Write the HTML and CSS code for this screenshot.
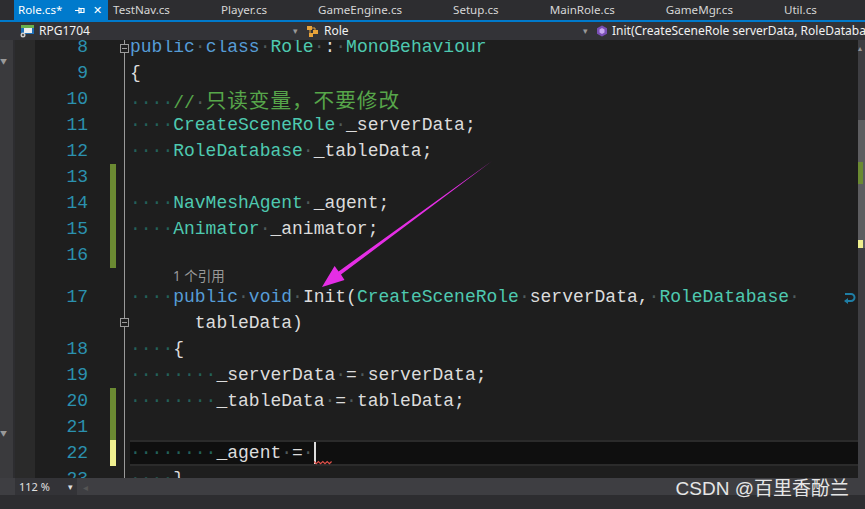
FILE: index.html
```html
<!DOCTYPE html>
<html lang="en">
<head>
    <meta charset="UTF-8">
    <title>Role.cs - Visual Studio</title>
    <link rel="stylesheet" href="styles.css">
</head>
<body>

    <div class="tabs">
        <div class="tab active">
            <span>Role.cs*</span>
            <svg class="pin" width="11" height="9" viewBox="0 0 11 9">
                <path d="M0 4.5h4M4 1.5v6M4 2.5h5v4H4M6 2.5v4" stroke="#fff" stroke-width="1.2" fill="none"/>
            </svg>
            <span class="close">&#10005;</span>
        </div>
        <div class="tab">TestNav.cs</div>
        <div class="tab">Player.cs</div>
        <div class="tab">GameEngine.cs</div>
        <div class="tab">Setup.cs</div>
        <div class="tab">MainRole.cs</div>
        <div class="tab">GameMgr.cs</div>
        <div class="tab">Util.cs</div>
    </div>

    <div class="navbar">
        <div class="combo first">
            <svg class="ico" width="16" height="14" viewBox="0 0 16 14">
                <rect x="2" y="1" width="13" height="9" fill="#1f6fb8"/>
                <rect x="2" y="1" width="13" height="3" fill="#6ab04c"/>
                <rect x="5" y="4" width="8" height="5" fill="#eee"/>
                <circle cx="4" cy="11" r="2.5" fill="#ccc"/>
                <circle cx="4" cy="11" r="1" fill="#333"/>
            </svg>
            <span>RPG1704</span>
            <span class="arrow">&#9662;</span>
        </div>
        <div class="combo second">
            <svg class="ico" width="14" height="14" viewBox="0 0 14 14">
                <rect x="1" y="2" width="5" height="4" fill="#e8a33a"/>
                <rect x="7" y="6" width="5" height="4" fill="#e8a33a"/>
                <rect x="3" y="9" width="4" height="4" fill="#e8a33a"/>
                <path d="M4 6v3M6 4h3v2" stroke="#e8a33a" fill="none"/>
            </svg>
            <span>Role</span>
            <span class="arrow">&#9662;</span>
        </div>
        <div class="combo third">
            <svg class="ico" width="12" height="12" viewBox="0 0 12 12">
                <polygon points="6,0.5 11,3.2 11,8.8 6,11.5 1,8.8 1,3.2" fill="#7a4fb5"/>
                <polygon points="6,3 8.5,4.4 8.5,7.6 6,9 3.5,7.6 3.5,4.4" fill="#c7a8f0"/>
            </svg>
            <span>Init(CreateSceneRole serverData, RoleDatabase tableData)</span>
        </div>
    </div>

    <div class="editor">
        <div class="sidepane">
            <span class="side-arrow">&#9660;</span>
            <span class="side-arrow down">&#9660;</span>
        </div>
        <div class="margin"></div>
        <div class="view">
            <div class="lines">
                <div class="row"><span class="num">8</span><span class="mark"></span><span class="fold"><i class="box first-box"></i></span><span class="code"><b class="kw">public</b><b class="sp">·</b><b class="kw">class</b><b class="sp">·</b><b class="ty">Role</b><b class="sp">·</b>:<b class="sp">·</b><b class="ty">MonoBehaviour</b></span></div>
                <div class="row"><span class="num">9</span><span class="mark"></span><span class="fold"></span><span class="code">{</span></div>
                <div class="row"><span class="num">10</span><span class="mark"></span><span class="fold"></span><span class="code"><b class="ws">····</b><b class="cm">//<b class="sp">·</b><b class="cjk">只读变量，不要修改</b></b></span></div>
                <div class="row"><span class="num">11</span><span class="mark"></span><span class="fold"></span><span class="code"><b class="ws">····</b><b class="ty">CreateSceneRole</b><b class="sp">·</b>_serverData;</span></div>
                <div class="row"><span class="num">12</span><span class="mark"></span><span class="fold"></span><span class="code"><b class="ws">····</b><b class="ty">RoleDatabase</b><b class="sp">·</b>_tableData;</span></div>
                <div class="row"><span class="num">13</span><span class="mark saved"></span><span class="fold"></span><span class="code"></span></div>
                <div class="row"><span class="num">14</span><span class="mark saved"></span><span class="fold"></span><span class="code"><b class="ws">····</b><b class="ty">NavMeshAgent</b><b class="sp">·</b>_agent;</span></div>
                <div class="row"><span class="num">15</span><span class="mark saved"></span><span class="fold"></span><span class="code"><b class="ws">····</b><b class="ty">Animator</b><b class="sp">·</b>_animator;</span></div>
                <div class="row"><span class="num">16</span><span class="mark saved"></span><span class="fold"></span><span class="code"></span></div>
                <div class="row lens"><span class="num"></span><span class="mark"></span><span class="fold"></span><span class="code">1 个引用</span></div>
                <div class="row"><span class="num">17</span><span class="mark"></span><span class="fold"></span><span class="code"><b class="ws">····</b><b class="kw">public</b><b class="sp">·</b><b class="kw">void</b><b class="sp">·</b>Init(<b class="ty">CreateSceneRole</b><b class="sp">·</b>serverData,<b class="sp">·</b><b class="ty">RoleDatabase</b><b class="sp">·</b><svg class="wrap-glyph" width="14" height="12" viewBox="0 0 14 12"><path d="M3 2h6a3.5 3.5 0 0 1 0 7H4" stroke="#1f7ea5" stroke-width="2" fill="none"/><path d="M6 6l-4 3l4 3z" fill="#1f7ea5"/></svg></span></div>
                <div class="row"><span class="num"></span><span class="mark"></span><span class="fold"><i class="box"></i></span><span class="code">      tableData)</span></div>
                <div class="row"><span class="num">18</span><span class="mark"></span><span class="fold"></span><span class="code"><b class="ws">····</b>{</span></div>
                <div class="row"><span class="num">19</span><span class="mark"></span><span class="fold"></span><span class="code"><b class="ws">········</b>_serverData<b class="sp">·</b>=<b class="sp">·</b>serverData;</span></div>
                <div class="row"><span class="num">20</span><span class="mark saved"></span><span class="fold"></span><span class="code"><b class="ws">········</b>_tableData<b class="sp">·</b>=<b class="sp">·</b>tableData;</span></div>
                <div class="row"><span class="num">21</span><span class="mark saved"></span><span class="fold"></span><span class="code"></span></div>
                <div class="row current"><span class="num">22</span><span class="mark edited"></span><span class="fold"></span><span class="code"><b class="ws">········</b>_agent<b class="sp">·</b>=<b class="sp">·</b><i class="caret"><svg class="squiggle" width="18" height="5" viewBox="0 0 18 5"><path d="M0 1.5l2.2 2.2l2.2-2.2l2.2 2.2l2.2-2.2l2.2 2.2l2.2-2.2l2.2 2.2l2.2-2.2" stroke="#e0514a" stroke-width="1.2" fill="none"/></svg></i></span></div>
                <div class="row"><span class="num">23</span><span class="mark"></span><span class="fold"></span><span class="code"><b class="ws">····</b>}</span></div>
            </div>

            <svg class="arrow-note" width="865" height="509" viewBox="0 0 865 509">
                <polygon points="492,161 341,274.6 344.5,280 322,287 334.6,266 338.6,271.4" fill="#e52ee5"/>
            </svg>
        </div>
        <div class="vscroll">
            <span class="vs-up">&#9652;</span>
            <div class="vs-thumb">
                <i class="vs-green"></i>
                <i class="vs-yellow"></i>
            </div>
        </div>
    </div>

    <div class="statusrow">
        <div class="zoom"><span>112 %</span><span class="arrow">&#9662;</span></div>
        <span class="hs-left">&#9666;</span>
    </div>
    <div class="bottom">
        <span class="watermark">CSDN @百里香酚兰</span>
    </div>

</body>
</html>
```

FILE: styles.css
```css
body {
    margin: 0;
    width: 865px;
    height: 509px;
    overflow: hidden;
    background-color: #2d2d30;
    font-family: 'Noto Sans', 'Noto Sans CJK SC', sans-serif;
    color: #d0d0d0;
}

/* document tabs */
.tabs {
    display: flex;
    height: 20px;
    padding-left: 14px;
    font-size: 11.6px;
    line-height: 20px;
    border-bottom: 2px solid #007acc;
}

.tab {
    padding: 0 46px 0 5px;
    white-space: nowrap;
    color: #d6d6d6;
}

.tab.active {
    display: flex;
    align-items: center;
    width: 90px;
    padding: 0 0 0 4px;
    background-color: #007acc;
    color: #fff;
}

.tab .pin {
    margin-left: 13px;
}

.tab .close {
    margin-left: 7px;
    font-size: 11px;
}

/* navigation bar */
.navbar {
    display: flex;
    height: 18px;
    background-color: #333337;
    font-size: 12px;
    line-height: 18px;
    color: #f1f1f1;
}

.combo {
    display: flex;
    align-items: center;
    white-space: nowrap;
    overflow: hidden;
}

.combo.first {
    width: 285px;
    margin-left: 15px;
}

.combo.second {
    width: 288px;
    margin-left: 2px;
}

.combo.third {
    flex: 1;
    margin-left: 2px;
}

.combo .ico {
    margin: 0 4px 0 4px;
    flex-shrink: 0;
}

.combo .arrow {
    margin-left: auto;
    margin-right: 2px;
    font-size: 9px;
    color: #999;
}

/* editor */
.editor {
    display: flex;
    height: 438px;
    overflow: hidden;
}

.sidepane {
    width: 13px;
    background-color: #3a3a3d;
    border-right: 2px solid #2d2d30;
    position: relative;
}

.side-arrow {
    position: absolute;
    left: 0;
    top: 16px;
    font-size: 7px;
    color: #999;
}

.side-arrow.down {
    top: 388px;
}

.margin {
    width: 20px;
    background-color: #2a2a2a;
}

.view {
    flex: 1;
    position: relative;
    background-color: #1e1e1e;
    overflow: hidden;
}

.lines {
    margin-top: -6px;
}

.row {
    display: flex;
    height: 26px;
    font-family: 'Liberation Mono', 'Noto Sans CJK SC', monospace;
    font-size: 18px;
    line-height: 26px;
    white-space: pre;
    color: #dcdcdc;
}

.num {
    width: 53px;
    padding-right: 7px;
    text-align: right;
    color: #2b91af;
}

.mark {
    width: 6px;
    margin-left: 15px;
}

.mark.saved {
    background-color: #6b8a32;
}

.mark.edited {
    background-color: #efef8f;
}

.fold {
    width: 14px;
    position: relative;
    background: linear-gradient(#9a9a9a, #9a9a9a) no-repeat 8px 0 / 1px 100%;
}

.box {
    position: absolute;
    left: 4px;
    top: 8px;
    width: 7px;
    height: 7px;
    border: 1px solid #9a9a9a;
    background: #1e1e1e linear-gradient(#9a9a9a, #9a9a9a) no-repeat center / 5px 1px;
}

.box.first-box {
    top: 10px;
}

.code {
    flex: 1;
    position: relative;
}

.code b {
    font-weight: normal;
}

.kw {
    color: #569cd6;
}

.ty {
    color: #4ec9b0;
}

.cm {
    color: #57a64a;
}

.cjk {
    font-family: 'Noto Sans CJK SC', sans-serif;
    font-size: 20.6px;
    letter-spacing: 1px;
    line-height: 26px;
}

.ws {
    color: #23615a;
}

.sp {
    color: #4f5a5a;
}

.wrap-glyph {
    position: absolute;
    left: 712px;
    top: 8px;
}

.row.lens {
    height: 16px;
    line-height: 16px;
    font-family: 'Noto Sans', 'Noto Sans CJK SC', sans-serif;
    font-size: 13.5px;
    color: #999;
}

.row.lens .code {
    padding-left: 43px;
}

.row.current .code {
    background-color: #0f0f0f;
    border-top: 2px solid #2b2b2b;
    border-bottom: 2px solid #2b2b2b;
    line-height: 22px;
}

.caret {
    display: inline-block;
    width: 2px;
    height: 22px;
    vertical-align: top;
    background-color: #dcdcdc;
    position: relative;
}

.squiggle {
    position: absolute;
    left: 0;
    top: 18px;
}

.arrow-note {
    position: absolute;
    left: -35px;
    top: -40px;
    pointer-events: none;
}

/* vertical scrollbar */
.vscroll {
    width: 7px;
    background-color: #3e3e42;
    position: relative;
}

.vs-up {
    position: absolute;
    top: 2px;
    left: 0;
    font-size: 8px;
    color: #999;
}

.vs-thumb {
    position: absolute;
    top: 80px;
    left: 0;
    width: 7px;
    height: 128px;
    background-color: #5d5d60;
}

.vs-green {
    position: absolute;
    top: 42px;
    left: 0;
    width: 5px;
    height: 22px;
    background-color: #6b8a32;
}

.vs-yellow {
    position: absolute;
    top: 120px;
    left: 0;
    width: 5px;
    height: 8px;
    background-color: #efef8f;
}

/* bottom */
.statusrow {
    display: flex;
    align-items: center;
    height: 17px;
    background-color: #3e3e42;
    font-size: 11px;
}

.zoom {
    display: flex;
    align-items: center;
    width: 58px;
    height: 17px;
    margin-left: 15px;
    padding-left: 4px;
    background-color: #333337;
    color: #e0e0e0;
}

.zoom .arrow {
    margin-left: auto;
    margin-right: 4px;
    font-size: 9px;
}

.hs-left {
    margin-left: 6px;
    font-size: 10px;
    color: #555;
}

.bottom {
    height: 14px;
    position: relative;
    background-color: #2d2d30;
}

.watermark {
    position: absolute;
    right: 16px;
    top: -22px;
    font-family: 'Liberation Sans', 'Noto Sans CJK SC', sans-serif;
    font-size: 19px;
    color: #e6e6e6;
}
```
